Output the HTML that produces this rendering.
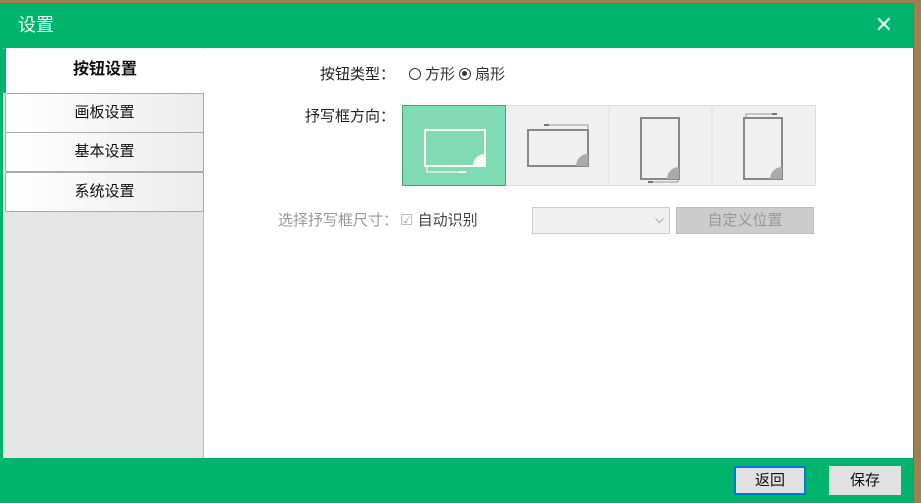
<!DOCTYPE html>
<html><head><meta charset="utf-8"><style>
*{margin:0;padding:0;box-sizing:border-box}
body{width:921px;height:503px;overflow:hidden;background:#a08050;font-family:"Liberation Sans","Noto Sans CJK SC",sans-serif;position:relative}
.win{position:absolute;left:0;top:3px;width:914px;height:500px;background:#fff;border-right:1px solid #1a9a5a}
.title{position:absolute;left:0;top:0;width:100%;height:45px;background:#00b46e;color:#e8fff4;font-size:18px;line-height:45px;padding-left:18px}
.x{position:absolute;right:20px;top:0;color:#d8fff0;font-size:22px;line-height:43px}
.left{position:absolute;left:0;top:45px;width:204px;height:410px;background:#e5e5e5;border-left:3px solid #00b46e;border-right:1px solid #bbb}
.tab{position:absolute;left:2px;width:199px;height:40px;border:1px solid #aaa;border-radius:2px;background:linear-gradient(90deg,#fff,#ececec);font-size:15px;text-align:center;line-height:38px;color:#111}
.tab.act{background:#fff;border:none;border-left:3px solid #00b46e;font-weight:bold;font-size:16px;height:45px;line-height:44px;left:0;width:201px}
.bottom{position:absolute;left:0;top:455px;width:100%;height:45px;background:#00b46e}
.btn{position:absolute;top:8px;height:29px;width:72px;background:#e1e1e1;border:1px solid #e1e1e1;font-size:15px;line-height:27px;text-align:center;color:#111}
.lbl{position:absolute;font-size:15px;color:#222;line-height:20px}
.r{display:inline-block;width:12px;height:12px;border:1.5px solid #333;border-radius:50%;vertical-align:-1px;position:relative;margin-right:4px}
.r.on::after{content:"";position:absolute;left:2px;top:2px;width:5px;height:5px;border-radius:50%;background:#333}
</style></head><body>
<div class="win">
<div class="title">设置<span class="x">✕</span></div>
<div class="left">
<div class="tab act" style="top:0">按钮设置</div>
<div class="tab" style="top:45px">画板设置</div>
<div class="tab" style="top:84px">基本设置</div>
<div class="tab" style="top:124px">系统设置</div>
</div>
<div class="lbl" style="left:320px;top:62px">按钮类型：</div>
<div class="lbl" style="left:409px;top:62px;color:#333"><span class="r"></span>方形 <span class="r on"></span>扇形</div>
<div class="lbl" style="left:305px;top:104px">抒写框方向：</div>
<svg style="position:absolute;left:402px;top:102px" width="414" height="82">
<rect x="0.5" y="0.5" width="413" height="80" fill="#f0f0f0" stroke="#ddd"/>
<line x1="207" y1="0" x2="207" y2="81" stroke="#ddd"/><line x1="310" y1="0" x2="310" y2="81" stroke="#ddd"/>
<rect x="0.5" y="0.5" width="103" height="80" fill="#80dbb5" stroke="#3fa57c"/>
<rect x="23" y="25" width="60" height="36" fill="none" stroke="#fff" stroke-width="2"/>
<path d="M83 49 A12 12 0 0 0 71 61 L83 61Z" fill="#fff"/>
<path d="M25 62V67H65" fill="none" stroke="#fff"/><rect x="57" y="66" width="6" height="2" fill="#fff"/>
<rect x="126" y="25" width="60" height="36" fill="none" stroke="#888" stroke-width="2"/>
<path d="M186 49 A12 12 0 0 0 174 61 L186 61Z" fill="#aaa"/>
<path d="M144 20H186V24" fill="none" stroke="#999"/><rect x="142" y="19" width="5" height="2" fill="#777"/>
<rect x="239" y="13" width="38" height="61" fill="none" stroke="#888" stroke-width="2"/>
<path d="M277 62 A12 12 0 0 0 265 74 L277 74Z" fill="#aaa"/>
<path d="M246 77H276V75" fill="none" stroke="#999"/><rect x="246" y="76" width="5" height="2" fill="#777"/>
<rect x="342" y="13" width="38" height="61" fill="none" stroke="#888" stroke-width="2"/>
<path d="M380 62 A12 12 0 0 0 368 74 L380 74Z" fill="#aaa"/>
<path d="M344 12V9H375" fill="none" stroke="#999"/><rect x="370" y="8" width="5" height="2" fill="#777"/>
</svg>
<div class="lbl" style="left:278px;top:208px;color:#999">选择抒写框尺寸：</div>
<div class="lbl" style="left:400px;top:208px;color:#444"><span style="color:#aaa">☑</span> 自动识别</div>
<div style="position:absolute;left:532px;top:204px;width:138px;height:27px;background:#f0f0f0;border:1px solid #ccc"><svg style="position:absolute;right:5px;top:10px" width="9" height="6"><path d="M0.5 0.5L4.5 4.5L8.5 0.5" fill="none" stroke="#aaa"/></svg></div>
<div style="position:absolute;left:676px;top:204px;width:138px;height:27px;background:#ccc;border:1px solid #bbb;color:#999;font-size:15px;text-align:center;line-height:25px">自定义位置</div>
<div class="bottom">
<div class="btn" style="left:734px;border:2px solid #0078d7;line-height:25px">返回</div>
<div class="btn" style="left:829px">保存</div>
</div>
</div>
</body></html>
